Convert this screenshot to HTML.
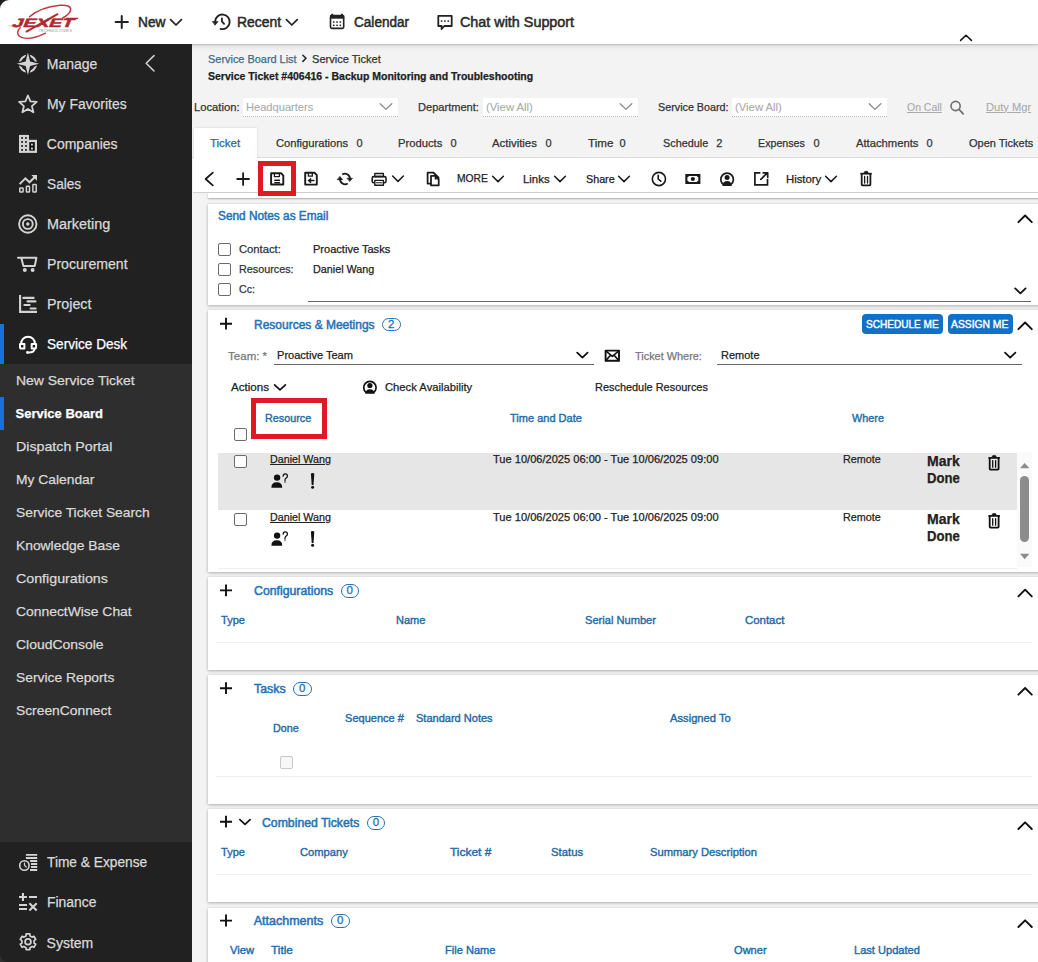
<!DOCTYPE html>
<html><head><meta charset="utf-8"><title>Service Ticket</title>
<style>
*{box-sizing:border-box;margin:0;padding:0}
html,body{width:1038px;height:962px;overflow:hidden;background:#f3f3f3;font-family:"Liberation Sans", sans-serif;color:#222}
.a{position:absolute;white-space:nowrap;line-height:1;z-index:20;-webkit-text-stroke:0.25px currentColor}
.r{position:absolute}
.card{position:absolute;left:208px;width:840px;background:#fff;box-shadow:0 1px 3px rgba(0,0,0,.28),0 0 1px rgba(0,0,0,.12)}
.cb{position:absolute;width:13px;height:13px;border:1px solid #6b6b6b;border-radius:2px;background:#fff;z-index:10}
.badge{position:absolute;border:1.5px solid #2372b6;border-radius:8px;color:#2372b6;font-size:11.5px;line-height:11px;-webkit-text-stroke:0.3px #2372b6;text-align:center;z-index:20;display:flex;align-items:center;justify-content:center}
.btn{position:absolute;background:#1170c8;border-radius:4px;z-index:10}
.red{position:absolute;border:5px solid #df1a23;z-index:30}
svg.ov{position:absolute;left:0;top:0;z-index:25}
</style></head><body>
<!-- header -->
<div class="r" style="left:0;top:0;width:1038px;height:44px;background:#fff;z-index:6;box-shadow:0 1px 1px rgba(0,0,0,.12),0 2px 6px rgba(0,0,0,.12)"></div>
<!-- sidebar -->
<div class="r" style="left:0;top:44px;width:192px;height:918px;background:#212121;z-index:7"></div>
<div class="r" style="left:0;top:364px;width:192px;height:478px;background:#2e2e2e;z-index:7"></div>
<div class="r" style="left:0;top:324px;width:4px;height:40px;background:#1672d8;z-index:8"></div>
<div class="r" style="left:0;top:397px;width:4px;height:33px;background:#1672d8;z-index:8"></div>
<!-- filter dropdowns -->
<div class="r" style="left:243px;top:98px;width:155px;height:19px;background:#fff;border-bottom:1px dotted #b5b5b5"></div>
<div class="r" style="left:483px;top:98px;width:155px;height:19px;background:#fff;border-bottom:1px dotted #b5b5b5"></div>
<div class="r" style="left:732px;top:98px;width:155px;height:19px;background:#fff;border-bottom:1px dotted #b5b5b5"></div>
<!-- tab bar -->
<div class="r" style="left:192px;top:157px;width:846px;height:1px;background:#dcdcdc"></div>
<div class="r" style="left:194px;top:127.5px;width:63px;height:31px;background:#fff;box-shadow:0 0 2px rgba(0,0,0,.15);z-index:2"></div>
<!-- toolbar -->
<div class="r" style="left:192.5px;top:158px;width:846px;height:35px;background:#fff;border-bottom:1px solid #cfcfcf;z-index:3"></div>
<!-- previous card peek -->
<div class="r" style="left:208px;top:193px;width:840px;height:5px;background:#fff;box-shadow:0 1px 2px rgba(0,0,0,.3);z-index:1"></div>
<!-- cards -->
<div class="card" style="top:203.5px;height:101.5px"></div>
<div class="card" style="top:309.7px;height:262.5px"></div>
<div class="card" style="top:577px;height:92.5px"></div>
<div class="card" style="top:675px;height:129px"></div>
<div class="card" style="top:809px;height:92.5px"></div>
<div class="card" style="top:907.5px;height:80px"></div>
<!-- send notes -->
<div class="cb" style="left:218px;top:243px"></div>
<div class="cb" style="left:218px;top:263px"></div>
<div class="cb" style="left:218px;top:283px"></div>
<div class="r" style="left:308px;top:300.5px;width:723px;height:1px;background:#666;z-index:5"></div>
<!-- resources -->
<div class="btn" style="left:862px;top:314px;width:81px;height:19.5px"></div>
<div class="btn" style="left:948px;top:314px;width:65px;height:19.5px"></div>
<div class="badge" style="left:381.5px;top:317.5px;width:19.5px;height:13.5px">2</div>
<div class="r" style="left:274px;top:363.8px;width:320px;height:1px;background:#666;z-index:5"></div>
<div class="r" style="left:716.5px;top:363.8px;width:305.5px;height:1px;background:#666;z-index:5"></div>
<div class="cb" style="left:233.5px;top:427.5px"></div>
<div class="r" style="left:218px;top:452.5px;width:799px;height:57.5px;background:#e6e6e6;z-index:5"></div>
<div class="cb" style="left:233.5px;top:455.2px"></div>
<div class="cb" style="left:233.5px;top:513.2px"></div>
<div class="r" style="left:1017px;top:452px;width:14.5px;height:115px;background:#fafafa;z-index:5"></div>
<div class="r" style="left:1020.4px;top:476px;width:8.5px;height:66px;background:#8c8c8c;border-radius:4.5px;z-index:6"></div>
<div class="r" style="left:218px;top:567.5px;width:799px;height:1px;background:#eee;z-index:5"></div>
<!-- configurations -->
<div class="badge" style="left:340.5px;top:584px;width:18.5px;height:13.5px">0</div>
<div class="r" style="left:216px;top:642px;width:816px;height:1px;background:#efefef;z-index:5"></div>
<!-- tasks -->
<div class="badge" style="left:293px;top:682px;width:18.5px;height:13.5px">0</div>
<div class="r" style="left:280px;top:756px;width:12.7px;height:12.8px;border:1px solid #c8c8c8;border-radius:2px;background:#f7f7f7;z-index:10"></div>
<div class="r" style="left:216px;top:776px;width:816px;height:1px;background:#efefef;z-index:5"></div>
<!-- combined -->
<div class="badge" style="left:366.8px;top:816px;width:18.5px;height:13.5px">0</div>
<div class="r" style="left:216px;top:873.5px;width:816px;height:1px;background:#efefef;z-index:5"></div>
<!-- attachments -->
<div class="badge" style="left:331px;top:914px;width:18.5px;height:13.5px">0</div>
<!-- red highlight boxes -->
<div class="red" style="left:258px;top:161px;width:38px;height:35px"></div>
<div class="red" style="left:251px;top:398px;width:76px;height:41px"></div>

<div class="a" style="left:137.90px;top:15.15px;font-size:14px;color:#2a2a2a;transform:scaleX(0.9816);transform-origin:0.70px 0;-webkit-text-stroke:0.5px #2a2a2a">New</div>
<div class="a" style="left:237.30px;top:15.15px;font-size:14px;color:#2a2a2a;transform:scaleX(0.9945);transform-origin:0.70px 0;-webkit-text-stroke:0.5px #2a2a2a">Recent</div>
<div class="a" style="left:354.30px;top:15.15px;font-size:14px;color:#2a2a2a;transform:scaleX(0.9693);transform-origin:0.70px 0;-webkit-text-stroke:0.5px #2a2a2a">Calendar</div>
<div class="a" style="left:460.30px;top:15.15px;font-size:14px;color:#2a2a2a;transform:scaleX(1.0256);transform-origin:0.70px 0;-webkit-text-stroke:0.5px #2a2a2a">Chat with Support</div>
<div class="a" style="left:46.80px;top:57.15px;font-size:14px;color:#d9d9d9">Manage</div>
<div class="a" style="left:46.80px;top:97.15px;font-size:14px;color:#d9d9d9;transform:scaleX(0.9936);transform-origin:0.70px 0">My Favorites</div>
<div class="a" style="left:46.80px;top:137.15px;font-size:14px;color:#d9d9d9">Companies</div>
<div class="a" style="left:46.80px;top:177.15px;font-size:14px;color:#d9d9d9;transform:scaleX(0.9761);transform-origin:0.70px 0">Sales</div>
<div class="a" style="left:46.80px;top:217.15px;font-size:14px;color:#d9d9d9;transform:scaleX(1.0274);transform-origin:0.70px 0">Marketing</div>
<div class="a" style="left:46.80px;top:257.15px;font-size:14px;color:#d9d9d9;transform:scaleX(1.0059);transform-origin:0.70px 0">Procurement</div>
<div class="a" style="left:46.80px;top:297.15px;font-size:14px;color:#d9d9d9;transform:scaleX(1.0198);transform-origin:0.70px 0">Project</div>
<div class="a" style="left:46.80px;top:337.15px;font-size:14px;color:#fff;transform:scaleX(0.9711);transform-origin:0.70px 0">Service Desk</div>
<div class="a" style="left:15.52px;top:373.57px;font-size:13.5px;color:#d9d9d9;transform:scaleX(1.0341);transform-origin:0.68px 0">New Service Ticket</div>
<div class="a" style="left:15.55px;top:407.00px;font-size:13px;color:#fff;font-weight:700">Service Board</div>
<div class="a" style="left:15.52px;top:439.57px;font-size:13.5px;color:#d9d9d9;transform:scaleX(1.0534);transform-origin:0.68px 0">Dispatch Portal</div>
<div class="a" style="left:15.52px;top:472.57px;font-size:13.5px;color:#d9d9d9;transform:scaleX(1.0245);transform-origin:0.68px 0">My Calendar</div>
<div class="a" style="left:15.52px;top:505.57px;font-size:13.5px;color:#d9d9d9;transform:scaleX(1.0241);transform-origin:0.68px 0">Service Ticket Search</div>
<div class="a" style="left:15.52px;top:538.57px;font-size:13.5px;color:#d9d9d9;transform:scaleX(1.0255);transform-origin:0.68px 0">Knowledge Base</div>
<div class="a" style="left:15.52px;top:571.57px;font-size:13.5px;color:#d9d9d9;transform:scaleX(1.0560);transform-origin:0.68px 0">Configurations</div>
<div class="a" style="left:15.52px;top:604.57px;font-size:13.5px;color:#d9d9d9;transform:scaleX(1.0280);transform-origin:0.68px 0">ConnectWise Chat</div>
<div class="a" style="left:15.52px;top:637.57px;font-size:13.5px;color:#d9d9d9;transform:scaleX(1.0331);transform-origin:0.68px 0">CloudConsole</div>
<div class="a" style="left:15.52px;top:670.57px;font-size:13.5px;color:#d9d9d9;transform:scaleX(1.0246);transform-origin:0.68px 0">Service Reports</div>
<div class="a" style="left:15.52px;top:703.57px;font-size:13.5px;color:#d9d9d9;transform:scaleX(1.0241);transform-origin:0.68px 0">ScreenConnect</div>
<div class="a" style="left:46.60px;top:855.15px;font-size:14px;color:#d9d9d9;transform:scaleX(0.9804);transform-origin:0.70px 0">Time &amp; Expense</div>
<div class="a" style="left:46.60px;top:895.15px;font-size:14px;color:#d9d9d9;transform:scaleX(0.9919);transform-origin:0.70px 0">Finance</div>
<div class="a" style="left:46.60px;top:935.65px;font-size:14px;color:#d9d9d9">System</div>
<div class="a" style="left:207.53px;top:53.97px;font-size:11.5px;color:#3b6b8c;transform:scaleX(0.9491);transform-origin:0.58px 0">Service Board List</div>
<div class="a" style="left:311.73px;top:53.97px;font-size:11.5px;color:#333;transform:scaleX(0.9610);transform-origin:0.58px 0">Service Ticket</div>
<div class="a" style="left:208.15px;top:70.89px;font-size:11px;color:#222;font-weight:700;transform:scaleX(0.9538);transform-origin:0.55px 0">Service Ticket #406416 - Backup Monitoring and Troubleshooting</div>
<div class="a" style="left:194.45px;top:101.69px;font-size:11px;color:#333;transform:scaleX(1.0211);transform-origin:0.55px 0">Location:</div>
<div class="a" style="left:246.45px;top:101.69px;font-size:11px;color:#aaa;transform:scaleX(1.0095);transform-origin:0.55px 0;-webkit-text-stroke:0.1px #aaa">Headquarters</div>
<div class="a" style="left:418.45px;top:101.69px;font-size:11px;color:#333;transform:scaleX(1.0058);transform-origin:0.55px 0">Department:</div>
<div class="a" style="left:486.45px;top:101.69px;font-size:11px;color:#aaa;transform:scaleX(1.0273);transform-origin:0.55px 0;-webkit-text-stroke:0.1px #aaa">(View All)</div>
<div class="a" style="left:658.45px;top:101.69px;font-size:11px;color:#333;transform:scaleX(0.9779);transform-origin:0.55px 0">Service Board:</div>
<div class="a" style="left:735.45px;top:101.69px;font-size:11px;color:#aaa;transform:scaleX(1.0273);transform-origin:0.55px 0;-webkit-text-stroke:0.1px #aaa">(View All)</div>
<div class="a" style="left:907.45px;top:101.69px;font-size:11px;color:#aaa;transform:scaleX(0.9495);transform-origin:0.55px 0;text-decoration:underline;-webkit-text-stroke:0.1px #aaa">On Call</div>
<div class="a" style="left:985.95px;top:101.69px;font-size:11px;color:#aaa;transform:scaleX(1.0127);transform-origin:0.55px 0;text-decoration:underline;-webkit-text-stroke:0.1px #aaa">Duty Mgr</div>
<div class="a" style="left:210.15px;top:137.69px;font-size:11px;color:#1f6aa5;transform:scaleX(1.0443);transform-origin:0.55px 0">Ticket</div>
<div class="a" style="left:276.05px;top:137.69px;font-size:11px;color:#333;transform:scaleX(1.0163);transform-origin:0.55px 0">Configurations</div>
<div class="a" style="left:356.45px;top:137.69px;font-size:11px;color:#333">0</div>
<div class="a" style="left:397.85px;top:137.69px;font-size:11px;color:#333;transform:scaleX(1.0225);transform-origin:0.55px 0">Products</div>
<div class="a" style="left:450.45px;top:137.69px;font-size:11px;color:#333">0</div>
<div class="a" style="left:492.45px;top:137.69px;font-size:11px;color:#333;transform:scaleX(1.0347);transform-origin:0.55px 0">Activities</div>
<div class="a" style="left:545.45px;top:137.69px;font-size:11px;color:#333">0</div>
<div class="a" style="left:587.95px;top:137.69px;font-size:11px;color:#333;transform:scaleX(1.0575);transform-origin:0.55px 0">Time</div>
<div class="a" style="left:619.45px;top:137.69px;font-size:11px;color:#333">0</div>
<div class="a" style="left:662.95px;top:137.69px;font-size:11px;color:#333;transform:scaleX(0.9846);transform-origin:0.55px 0">Schedule</div>
<div class="a" style="left:716.15px;top:137.69px;font-size:11px;color:#333">2</div>
<div class="a" style="left:758.45px;top:137.69px;font-size:11px;color:#333;transform:scaleX(0.9698);transform-origin:0.55px 0">Expenses</div>
<div class="a" style="left:813.45px;top:137.69px;font-size:11px;color:#333">0</div>
<div class="a" style="left:855.85px;top:137.69px;font-size:11px;color:#333;transform:scaleX(1.0222);transform-origin:0.55px 0">Attachments</div>
<div class="a" style="left:926.45px;top:137.69px;font-size:11px;color:#333">0</div>
<div class="a" style="left:969.05px;top:137.69px;font-size:11px;color:#333">Open Tickets</div>
<div class="a" style="left:523.45px;top:173.69px;font-size:11px;color:#222;transform:scaleX(1.0360);transform-origin:0.55px 0">Links</div>
<div class="a" style="left:586.05px;top:173.69px;font-size:11px;color:#222;transform:scaleX(0.9761);transform-origin:0.55px 0">Share</div>
<div class="a" style="left:786.05px;top:173.69px;font-size:11px;color:#222;transform:scaleX(1.0313);transform-origin:0.55px 0">History</div>
<div class="a" style="left:457.45px;top:173.19px;font-size:11px;color:#222;transform:scaleX(0.9340);transform-origin:0.55px 0">MORE</div>
<div class="a" style="left:217.97px;top:210.22px;font-size:12.5px;color:#2372b6;transform:scaleX(0.9453);transform-origin:0.62px 0;-webkit-text-stroke:0.5px #2372b6">Send Notes as Email</div>
<div class="a" style="left:239.05px;top:244.09px;font-size:11px;color:#333;transform:scaleX(1.0202);transform-origin:0.55px 0">Contact:</div>
<div class="a" style="left:239.05px;top:264.09px;font-size:11px;color:#333;transform:scaleX(0.9806);transform-origin:0.55px 0">Resources:</div>
<div class="a" style="left:239.05px;top:284.09px;font-size:11px;color:#333;transform:scaleX(0.9667);transform-origin:0.55px 0">Cc:</div>
<div class="a" style="left:312.85px;top:244.09px;font-size:11px;color:#222;transform:scaleX(1.0046);transform-origin:0.55px 0">Proactive Tasks</div>
<div class="a" style="left:312.85px;top:264.09px;font-size:11px;color:#222;transform:scaleX(0.9790);transform-origin:0.55px 0">Daniel Wang</div>
<div class="a" style="left:253.78px;top:318.72px;font-size:12.5px;color:#2372b6;transform:scaleX(0.9586);transform-origin:0.62px 0;-webkit-text-stroke:0.5px #2372b6">Resources &amp; Meetings</div>
<div class="a" style="left:228.12px;top:351.37px;font-size:11.5px;color:#777">Team: *</div>
<div class="a" style="left:277.23px;top:350.07px;font-size:11.5px;color:#222;transform:scaleX(0.9600);transform-origin:0.58px 0">Proactive Team</div>
<div class="a" style="left:635.42px;top:351.37px;font-size:11.5px;color:#777;transform:scaleX(0.9483);transform-origin:0.58px 0">Ticket Where:</div>
<div class="a" style="left:720.82px;top:350.07px;font-size:11.5px;color:#222;transform:scaleX(0.9553);transform-origin:0.58px 0">Remote</div>
<div class="a" style="left:231.43px;top:382.07px;font-size:11.5px;color:#222;transform:scaleX(1.0109);transform-origin:0.58px 0">Actions</div>
<div class="a" style="left:384.62px;top:382.07px;font-size:11.5px;color:#222;transform:scaleX(0.9767);transform-origin:0.58px 0">Check Availability</div>
<div class="a" style="left:595.42px;top:382.07px;font-size:11.5px;color:#222;transform:scaleX(0.9493);transform-origin:0.58px 0">Reschedule Resources</div>
<div class="a" style="left:265.12px;top:412.87px;font-size:11.5px;color:#1f6aa5;transform:scaleX(0.9379);transform-origin:0.58px 0;-webkit-text-stroke:0.4px #1f6aa5">Resource</div>
<div class="a" style="left:510.43px;top:412.87px;font-size:11.5px;color:#1f6aa5;transform:scaleX(0.9584);transform-origin:0.58px 0;-webkit-text-stroke:0.4px #1f6aa5">Time and Date</div>
<div class="a" style="left:852.42px;top:412.87px;font-size:11.5px;color:#1f6aa5;transform:scaleX(0.9407);transform-origin:0.58px 0;-webkit-text-stroke:0.4px #1f6aa5">Where</div>
<div class="a" style="left:269.75px;top:454.09px;font-size:11px;color:#222;transform:scaleX(0.9741);transform-origin:0.55px 0;text-decoration:underline">Daniel Wang</div>
<div class="a" style="left:493.45px;top:454.09px;font-size:11px;color:#222;transform:scaleX(1.0068);transform-origin:0.55px 0">Tue 10/06/2025 06:00 - Tue 10/06/2025 09:00</div>
<div class="a" style="left:843.05px;top:454.09px;font-size:11px;color:#222;transform:scaleX(0.9800);transform-origin:0.55px 0">Remote</div>
<div class="a" style="left:269.75px;top:512.09px;font-size:11px;color:#222;transform:scaleX(0.9741);transform-origin:0.55px 0;text-decoration:underline">Daniel Wang</div>
<div class="a" style="left:493.45px;top:512.09px;font-size:11px;color:#222;transform:scaleX(1.0068);transform-origin:0.55px 0">Tue 10/06/2025 06:00 - Tue 10/06/2025 09:00</div>
<div class="a" style="left:843.05px;top:512.09px;font-size:11px;color:#222;transform:scaleX(0.9800);transform-origin:0.55px 0">Remote</div>
<div class="a" style="left:926.90px;top:454.35px;font-size:14px;color:#222;font-weight:700;transform:scaleX(1.0042);transform-origin:0.70px 0">Mark</div>
<div class="a" style="left:926.90px;top:471.35px;font-size:14px;color:#222;font-weight:700;transform:scaleX(0.9357);transform-origin:0.70px 0">Done</div>
<div class="a" style="left:926.90px;top:512.15px;font-size:14px;color:#222;font-weight:700;transform:scaleX(1.0042);transform-origin:0.70px 0">Mark</div>
<div class="a" style="left:926.90px;top:528.55px;font-size:14px;color:#222;font-weight:700;transform:scaleX(0.9357);transform-origin:0.70px 0">Done</div>
<div class="a" style="left:253.78px;top:585.02px;font-size:12.5px;color:#2372b6;transform:scaleX(0.9823);transform-origin:0.62px 0;-webkit-text-stroke:0.5px #2372b6">Configurations</div>
<div class="a" style="left:221.12px;top:615.07px;font-size:11.5px;color:#1f6aa5;transform:scaleX(0.9576);transform-origin:0.58px 0;-webkit-text-stroke:0.4px #1f6aa5">Type</div>
<div class="a" style="left:395.93px;top:615.07px;font-size:11.5px;color:#1f6aa5;transform:scaleX(0.9574);transform-origin:0.58px 0;-webkit-text-stroke:0.4px #1f6aa5">Name</div>
<div class="a" style="left:585.42px;top:615.07px;font-size:11.5px;color:#1f6aa5;transform:scaleX(0.9645);transform-origin:0.58px 0;-webkit-text-stroke:0.4px #1f6aa5">Serial Number</div>
<div class="a" style="left:745.42px;top:615.07px;font-size:11.5px;color:#1f6aa5;transform:scaleX(0.9917);transform-origin:0.58px 0;-webkit-text-stroke:0.4px #1f6aa5">Contact</div>
<div class="a" style="left:253.78px;top:682.92px;font-size:12.5px;color:#2372b6;transform:scaleX(0.9886);transform-origin:0.62px 0;-webkit-text-stroke:0.5px #2372b6">Tasks</div>
<div class="a" style="left:272.62px;top:722.87px;font-size:11.5px;color:#1f6aa5;transform:scaleX(0.9330);transform-origin:0.58px 0;-webkit-text-stroke:0.4px #1f6aa5">Done</div>
<div class="a" style="left:345.43px;top:713.07px;font-size:11.5px;color:#1f6aa5;transform:scaleX(0.9591);transform-origin:0.58px 0;-webkit-text-stroke:0.4px #1f6aa5">Sequence #</div>
<div class="a" style="left:416.03px;top:713.07px;font-size:11.5px;color:#1f6aa5;transform:scaleX(0.9582);transform-origin:0.58px 0;-webkit-text-stroke:0.4px #1f6aa5">Standard Notes</div>
<div class="a" style="left:670.42px;top:713.07px;font-size:11.5px;color:#1f6aa5;transform:scaleX(0.9718);transform-origin:0.58px 0;-webkit-text-stroke:0.4px #1f6aa5">Assigned To</div>
<div class="a" style="left:261.88px;top:817.02px;font-size:12.5px;color:#2372b6;transform:scaleX(0.9791);transform-origin:0.62px 0;-webkit-text-stroke:0.5px #2372b6">Combined Tickets</div>
<div class="a" style="left:220.93px;top:846.67px;font-size:11.5px;color:#1f6aa5;transform:scaleX(0.9576);transform-origin:0.58px 0;-webkit-text-stroke:0.4px #1f6aa5">Type</div>
<div class="a" style="left:300.43px;top:846.67px;font-size:11.5px;color:#1f6aa5;transform:scaleX(0.9690);transform-origin:0.58px 0;-webkit-text-stroke:0.4px #1f6aa5">Company</div>
<div class="a" style="left:450.43px;top:846.67px;font-size:11.5px;color:#1f6aa5;transform:scaleX(1.0405);transform-origin:0.58px 0;-webkit-text-stroke:0.4px #1f6aa5">Ticket #</div>
<div class="a" style="left:550.82px;top:846.67px;font-size:11.5px;color:#1f6aa5;transform:scaleX(0.9846);transform-origin:0.58px 0;-webkit-text-stroke:0.4px #1f6aa5">Status</div>
<div class="a" style="left:650.42px;top:846.67px;font-size:11.5px;color:#1f6aa5;transform:scaleX(0.9725);transform-origin:0.58px 0;-webkit-text-stroke:0.4px #1f6aa5">Summary Description</div>
<div class="a" style="left:253.78px;top:915.22px;font-size:12.5px;color:#2372b6;-webkit-text-stroke:0.5px #2372b6">Attachments</div>
<div class="a" style="left:230.23px;top:944.57px;font-size:11.5px;color:#1f6aa5;transform:scaleX(0.9748);transform-origin:0.58px 0;-webkit-text-stroke:0.4px #1f6aa5">View</div>
<div class="a" style="left:271.12px;top:944.57px;font-size:11.5px;color:#1f6aa5;transform:scaleX(1.0298);transform-origin:0.58px 0;-webkit-text-stroke:0.4px #1f6aa5">Title</div>
<div class="a" style="left:445.43px;top:944.57px;font-size:11.5px;color:#1f6aa5;transform:scaleX(0.9614);transform-origin:0.58px 0;-webkit-text-stroke:0.4px #1f6aa5">File Name</div>
<div class="a" style="left:734.42px;top:944.57px;font-size:11.5px;color:#1f6aa5;transform:scaleX(0.9619);transform-origin:0.58px 0;-webkit-text-stroke:0.4px #1f6aa5">Owner</div>
<div class="a" style="left:854.32px;top:944.57px;font-size:11.5px;color:#1f6aa5;transform:scaleX(0.9615);transform-origin:0.58px 0;-webkit-text-stroke:0.4px #1f6aa5">Last Updated</div>
<div class="a" style="left:865.98px;top:319.11px;font-size:10.5px;color:#fff;transform:scaleX(0.9584);transform-origin:0.53px 0;-webkit-text-stroke:0.4px #fff">SCHEDULE ME</div>
<div class="a" style="left:951.48px;top:319.11px;font-size:10.5px;color:#fff;transform:scaleX(0.9823);transform-origin:0.53px 0;-webkit-text-stroke:0.4px #fff">ASSIGN ME</div>
<svg class="ov" width="1038" height="962" viewBox="0 0 1038 962" fill="none" stroke-linecap="round" stroke-linejoin="round">
<!-- window corner -->
<path d="M0 0 H9 A9 9 0 0 0 0 9 Z" fill="#1e1e1e" stroke="none"/>
<path d="M0 962 H8 A8 8 0 0 1 0 954 Z" fill="#3a3a3a" stroke="none" opacity="0.6"/>
<!-- logo -->
<g>
  <path d="M29.5 16.8 C36 11 48 6.5 60 5.3 C67 4.7 71 6.2 70.6 9.8 C70.3 12.5 67 15.5 62.5 18" stroke="#c23a40" stroke-width="1.5"/>
  <path d="M20.3 27.6 C16.5 31 16.5 35.5 21.5 37.4 C27 39.3 36 38 45.5 33.2" stroke="#c23a40" stroke-width="1.4"/>
  <path d="M57.5 14.2 L26.5 31.6" stroke="#b8262d" stroke-width="1.9"/>
  <g transform="translate(11.5 26.5) skewX(-22)">
    <text x="0" y="0" font-family="Liberation Sans" font-weight="bold" font-size="12" fill="#b22a30" textLength="61" lengthAdjust="spacingAndGlyphs" stroke="#b22a30" stroke-width="0.5">JEXET</text>
  </g>
  <path d="M7.8 26 L18 25.2 L18 26.6 Z" fill="#b22a30" stroke="none"/>
  <path d="M66 17.8 L78.5 17.8 L77.5 19.2 L66 19.2 Z" fill="#b22a30" stroke="none"/>
  <text x="38.5" y="31.8" font-family="Liberation Sans" font-size="3" fill="#9a9a9a" textLength="33.5" lengthAdjust="spacingAndGlyphs" stroke="none">TECHNOLOGIES</text>
</g>
<!-- header icons -->
<g stroke="#222" stroke-width="1.7">
  <path d="M115.6 22 H127.9 M121.75 15.9 V28.1" stroke-width="2"/>
  <path d="M170.6 19.6 L176 25 L181.4 19.6" stroke-width="1.75"/>
  <path d="M215.1 21.4 A7.3 7.3 0 1 1 220.6 28.9" stroke-width="1.9"/>
  <path d="M212.7 21.6 H217.9 L215.3 24.9 Z" fill="#222" stroke-width="0.8"/>
  <path d="M221.9 18.3 V21.4 L224.1 23.9" stroke-width="1.8"/>
  <path d="M286.4 19.6 L291.8 25 L297.2 19.6" stroke-width="1.75"/>
  <rect x="330.5" y="15.6" width="13.2" height="12.8" rx="1.3" stroke-width="1.6"/>
  <rect x="330" y="15.3" width="14.2" height="3.4" fill="#222" stroke="none"/>
  <rect x="331.2" y="13.8" width="2" height="2" fill="#222" stroke="none"/>
  <rect x="341" y="13.8" width="2" height="2" fill="#222" stroke="none"/>
  <g fill="#222" stroke="none">
    <rect x="333" y="21.3" width="1.5" height="1.5"/><rect x="336.3" y="21.3" width="1.5" height="1.5"/><rect x="339.6" y="21.3" width="1.5" height="1.5"/>
    <rect x="333" y="24.6" width="1.5" height="1.5"/><rect x="336.3" y="24.6" width="1.5" height="1.5"/><rect x="339.6" y="24.6" width="1.5" height="1.5"/>
  </g>
  <path d="M438.3 15.9 H451.7 V26 H444.3 L441.6 29 V26 H438.3 Z" stroke-width="1.8"/>
  <g fill="#222" stroke="none"><circle cx="441.6" cy="21.1" r="0.9"/><circle cx="444.9" cy="21.1" r="0.9"/><circle cx="448.3" cy="21.1" r="0.9"/></g>
  <path d="M960.6 40.4 L966 35.3 L971.4 40.4" stroke="#111" stroke-width="1.5"/>
</g>
<!-- sidebar icons -->
<g stroke="#d4d4d4" stroke-width="2" fill="none">
  <circle cx="27.9" cy="63.8" r="8.2" stroke-width="2.1"/>
  <path d="M27.9 51 L31.9 59.8 L40.7 63.8 L31.9 67.8 L27.9 76.6 L23.9 67.8 L15.1 63.8 L23.9 59.8 Z" fill="#212121" stroke="none"/>
  <path d="M27.9 52.5 L30.1 61.6 L39.2 63.8 L30.1 66 L27.9 75.1 L25.7 66 L16.6 63.8 L25.7 61.6 Z" fill="#d4d4d4" stroke="none"/>
  <path d="M154 55.6 L146.2 63.3 L154 71" stroke-width="1.5"/>
  <path d="M27.9 95.5 L30.4 101.3 L36.7 101.9 L31.9 106.1 L33.4 112.3 L27.9 109 L22.4 112.3 L23.9 106.1 L19.1 101.9 L25.4 101.3 Z" stroke-width="1.8"/>
  <rect x="19" y="134.9" width="10" height="18" fill="#d4d4d4" stroke="none"/>
  <rect x="29" y="139.8" width="8" height="13.1" fill="#d4d4d4" stroke="none"/>
  <g fill="#111" stroke="none">
    <rect x="21.2" y="137.1" width="1.7" height="1.7"/><rect x="25.1" y="137.1" width="1.7" height="1.7"/>
    <rect x="21.2" y="141.1" width="1.7" height="1.7"/><rect x="25.1" y="141.1" width="1.7" height="1.7"/>
    <rect x="21.2" y="145.1" width="1.7" height="1.7"/><rect x="25.1" y="145.1" width="1.7" height="1.7"/>
    <rect x="21.2" y="149.1" width="1.7" height="1.7"/><rect x="25.1" y="149.1" width="1.7" height="1.7"/>
    <rect x="29.3" y="142.1" width="5.5" height="8.6"/>
  </g>
  <g fill="#d4d4d4" stroke="none"><rect x="31" y="143.7" width="1.9" height="1.8"/><rect x="31" y="147.6" width="1.9" height="1.9"/></g>
  <path d="M19.6 184.1 L25.4 178.4 L29.4 182.3 L35.2 176.7" stroke-width="2" stroke-linecap="butt" stroke-linejoin="miter"/>
  <path d="M31.3 175 H37 V180.7 Z" fill="#d4d4d4" stroke="none"/>
  <rect x="19.8" y="188" width="3.3" height="4.1" rx="0.6" stroke-width="1.5"/>
  <rect x="26.4" y="186.3" width="3.1" height="5.8" rx="0.6" stroke-width="1.5"/>
  <rect x="32.9" y="184.5" width="3.3" height="7.6" rx="0.6" stroke-width="1.5"/>
  <circle cx="27.8" cy="224" r="8.7" stroke-width="1.9"/>
  <circle cx="27.8" cy="224" r="4.9" stroke-width="1.9"/>
  <circle cx="27.8" cy="224" r="1.7" fill="#d4d4d4" stroke="none"/>
  <path d="M18 257.8 H21.3 M21.3 257.8 H36.4 L34.8 265.9 H23.4 Z" stroke-width="2" stroke-linejoin="round"/>
  <circle cx="24.8" cy="269.9" r="2" fill="#d4d4d4" stroke="none"/>
  <circle cx="32.6" cy="269.9" r="2" fill="#d4d4d4" stroke="none"/>
  <path d="M20.1 294.9 V311.9 H37" stroke-width="2.1" stroke-linecap="butt" stroke-linejoin="miter"/>
  <path d="M23.4 297.9 H33.6 M27.6 301.4 H35.4 M24.4 305 H29.6 M30.6 308.5 H35.6" stroke-width="2.2" stroke-linecap="round"/>
  <g stroke="#fff">
  <path d="M21.2 343.5 A6.85 6.85 0 0 1 34.9 343.5" stroke-width="2"/>
  <path d="M20.2 344 H24.4 V348.6 H21.6 Q20 348.6 20 347 V344 Z" stroke-width="2"/>
  <path d="M35.9 344 H31.7 V348.6 H34.5 Q36.1 348.6 36.1 347 V344 Z" stroke-width="2"/>
  <path d="M34.5 349.2 C34.3 351.6 32.6 352.6 28.5 352.6" stroke-width="1.9"/>
  <circle cx="27.5" cy="352.5" r="1.4" fill="#fff" stroke="none"/>
  </g>
  <circle cx="24.4" cy="865.5" r="4.7" stroke-width="1.6"/>
  <path d="M24.5 863.2 V865.4 L26.2 867" stroke-width="1.2"/>
  <path d="M25.9 854.9 H37.2 M25.9 857.95 H37.2 M30.1 860.95 H37.2 M31 864 H37.2 M31 867 H37.2 M30 870.05 H37.2" stroke-width="1.9" stroke-linecap="butt"/>
  <path d="M19 897 H26.9 M22.95 893 V900.9 M29 897 H37 M19 905 H27 M19 909 H27 M29.4 903.3 L36.7 910.4 M36.7 903.3 L29.4 910.4" stroke-width="2.1" stroke-linecap="butt"/>
  <path d="M25.98 935.94 L26.18 933.91 L29.82 933.91 L30.02 935.94 L32.07 937.12 L33.92 936.28 L35.75 939.43 L34.09 940.62 L34.09 942.98 L35.75 944.17 L33.92 947.32 L32.07 946.48 L30.02 947.66 L29.82 949.69 L26.18 949.69 L25.98 947.66 L23.93 946.48 L22.08 947.32 L20.25 944.17 L21.91 942.98 L21.91 940.62 L20.25 939.43 L22.08 936.28 L23.93 937.12 Z" stroke-width="1.7"/>
  <circle cx="28" cy="941.8" r="2.9" stroke-width="1.8"/>
</g>
<!-- filter row icons -->
<g stroke="#8a8a8a" stroke-width="1.3">
  <path d="M380.2 103.8 L386 109.4 L391.8 103.8"/>
  <path d="M620.2 103.8 L626 109.4 L631.8 103.8"/>
  <path d="M869.2 103.8 L875 109.4 L880.8 103.8"/>
  <circle cx="955.6" cy="106" r="4.6" stroke="#6e6e6e" stroke-width="1.6"/>
  <path d="M959 109.4 L963.2 113.8" stroke="#6e6e6e" stroke-width="1.7"/>
  <path d="M302.9 55.2 L306 58.3 L302.9 61.4" stroke="#222" stroke-width="1.5"/>
</g>
<!-- toolbar icons -->
<g stroke="#1a1a1a" stroke-width="1.6">
  <path d="M212.8 172.6 L205.6 179 L212.8 185.4" stroke-width="1.8"/>
  <path d="M237.2 179 H249 M243.1 173.1 V184.9" stroke-width="1.8"/>
  <path d="M271.1 173.2 H281.1 L283.3 175.6 V184.5 H271.1 Z" stroke-width="1.9"/>
  <path d="M274.4 173.3 V176.6 H279.4 V173.3" stroke-width="1.3"/>
  <path d="M274.3 180.3 H280.1 M274.3 182.7 H280.1" stroke-width="1.5" stroke-linecap="butt"/>
  <path d="M305.2 172.8 H314.7 L316.8 175.2 V184.6 H305.2 Z" stroke-width="1.9"/>
  <path d="M308.4 172.9 V176.2 H312.3 V172.9" stroke-width="1.3"/>
  <path d="M308.6 180.6 H313.9" stroke-width="1.5"/>
  <path d="M310.4 178.5 L308.3 180.6 L310.4 182.7 Z" fill="#1a1a1a" stroke-width="1"/>
  <path d="M342.3 174.4 A5 5 0 0 1 349.9 179.2" stroke-width="1.8" stroke-linecap="butt"/>
  <path d="M347.2 178.2 H352.5 L349.85 181.3 Z" fill="#1a1a1a" stroke-width="0.6"/>
  <path d="M347.7 183.5 A5 5 0 0 1 340.1 178.8" stroke-width="1.8" stroke-linecap="butt"/>
  <path d="M337.4 179.7 H342.7 L340.05 176.6 Z" fill="#1a1a1a" stroke-width="0.6"/>
  <rect x="374.8" y="173.5" width="8.6" height="3" stroke-width="1.3"/>
  <rect x="372.2" y="176.6" width="13.8" height="6.2" rx="1.6" stroke-width="1.6"/>
  <rect x="374.8" y="180.4" width="8.6" height="4.8" fill="#fff" stroke-width="1.4"/>
  <path d="M376.4 182.7 H381.8" stroke-width="1.1"/>
  <path d="M392.6 176 L398 181.4 L403.4 176" stroke-width="1.5"/>
  <path d="M430.4 183.5 H427.6 V172.5 H433.3 L438.6 177.6" stroke-width="1.75"/>
  <path d="M431 175.9 H435.3 L438.7 179.2 V185.4 H431 Z" stroke-width="1.75"/>
  <path d="M435.4 176 V178.9 H438.5" stroke-width="1.4"/>
  <path d="M492.6 176.2 L498 181.6 L503.4 176.2" stroke-width="1.5"/>
  <path d="M554.6 176.2 L560 181.6 L565.4 176.2" stroke-width="1.5"/>
  <path d="M618.6 176.2 L624 181.6 L629.4 176.2" stroke-width="1.5"/>
  <circle cx="658.9" cy="179" r="6.6" stroke-width="1.6"/>
  <path d="M658.2 175.3 V179 L660.8 181.2" stroke-width="1.6"/>
  <rect x="685.3" y="174" width="15.1" height="10" fill="#1a1a1a" stroke="none"/>
  <path d="M688.9 176.1 H696.8 Q697 177.1 698.3 177.3 V180.7 Q697 180.9 696.8 181.9 H688.9 Q688.7 180.9 687.4 180.7 V177.3 Q688.7 177.1 688.9 176.1 Z" fill="#fff" stroke="none"/>
  <circle cx="692.85" cy="179" r="2.1" fill="#1a1a1a" stroke="none"/>
  <path d="M723.2 184.3 A6.3 6.3 0 1 1 731 184.3" stroke-width="1.7"/>
  <circle cx="727.1" cy="177.6" r="2.5" fill="#1a1a1a" stroke="none"/>
  <path d="M722.5 185.9 Q722.7 181.1 727.1 181.1 Q731.5 181.1 731.7 185.9 Z" fill="#1a1a1a" stroke="none"/>
  <path d="M760.4 172.9 H754.9 V184.8 H767.5 V179" stroke-width="1.7" stroke-linejoin="miter" stroke-linecap="butt"/>
  <path d="M760.8 179.4 L767 173.2 M763.2 172.9 H767.7 V177.4" stroke-width="1.7"/>
  <path d="M825.6 176.2 L831 181.6 L836.4 176.2" stroke-width="1.5"/>
  <path d="M864 172.9 L864.9 171.3 H867.3 L868.2 172.9 Z" fill="#1a1a1a" stroke-width="0.6"/>
  <path d="M860.3 173.7 H871.8" stroke-width="1.7" stroke-linecap="butt"/>
  <path d="M861.7 174.2 V184.6 Q861.7 185.4 862.5 185.4 H869.6 Q870.4 185.4 870.4 184.6 V174.2" stroke-width="1.8"/>
  <path d="M864.6 176.5 V183 M867.5 176.5 V183" stroke-width="1.3"/>
</g>
<!-- card icons -->
<g stroke="#111" stroke-width="1.6">
  <path d="M1018.4 222.2 L1025.1 215.5 L1031.8 222.2" stroke-width="1.9"/>
  <path d="M1015.2 288.4 L1020.4 293.4 L1025.6 288.4" stroke-width="1.8"/>
  <path d="M220 323.7 H232 M226 317.7 V329.5" stroke-width="1.9" stroke-linecap="butt"/>
  <path d="M1018.4 329.2 L1025.1 322.5 L1031.8 329.2" stroke-width="1.9"/>
  <path d="M577.2 352.7 L582.4 357.6 L587.6 352.7" stroke-width="1.8"/>
  <path d="M1005 352.7 L1010.2 357.6 L1015.4 352.7" stroke-width="1.8"/>
  <rect x="605.6" y="350.6" width="13.4" height="10.2" stroke-width="1.9"/>
  <path d="M605.8 350.8 L612.3 356.4 L618.8 350.8 M605.8 360.6 L610.5 355.3 M618.8 360.6 L614.1 355.3" stroke-width="1.6"/>
  <path d="M274.6 384.8 L280 389.8 L285.4 384.8" stroke-width="1.7"/>
  <path d="M366 392.4 A6.2 6.2 0 1 1 373.8 392.4" stroke-width="1.7"/>
  <circle cx="369.9" cy="385.5" r="2.6" fill="#111" stroke="none"/>
  <path d="M365.3 393.7 Q365.5 389.2 369.9 389.2 Q374.3 389.2 374.5 393.7 Z" fill="#111" stroke="none"/>
  <path d="M220 590.4 H232 M226 584.4 V596.2" stroke-width="1.9" stroke-linecap="butt"/>
  <path d="M1018.4 596.4 L1025.1 589.7 L1031.8 596.4" stroke-width="1.9"/>
  <path d="M220 688.2 H232 M226 682.2 V694.0" stroke-width="1.9" stroke-linecap="butt"/>
  <path d="M1018.4 694.7 L1025.1 688.0 L1031.8 694.7" stroke-width="1.9"/>
  <path d="M220 821.8 H232 M226 815.8 V827.6" stroke-width="1.9" stroke-linecap="butt"/>
  <path d="M239.9 819.6 L245 824.3 L250.1 819.6" stroke-width="1.7"/>
  <path d="M1018.4 829 L1025.1 822.3 L1031.8 829" stroke-width="1.9"/>
  <path d="M220 920.6 H232 M226 914.6 V926.4" stroke-width="1.9" stroke-linecap="butt"/>
  <path d="M1018.4 927 L1025.1 920.3 L1031.8 927" stroke-width="1.9"/>
</g>
<!-- row icons -->
<g fill="#111" stroke="none">
  <circle cx="277.1" cy="477.6" r="3.2"/>
  <path d="M271.4 487.8 Q271.2 482.3 276.8 482.3 Q282.4 482.3 282.2 487.8 Z"/>
  <path d="M283.1 476.2 Q283.1 473.8 285.3 473.8 Q287.4 473.8 287.4 475.9 Q287.4 477.4 285.9 478.3 Q285 478.9 285 480.4" fill="none" stroke="#111" stroke-width="1.25"/>
  <circle cx="285" cy="482.0" r="0.75"/>
  <path d="M310.9 473.6 Q312.6 472.5 314.3 473.6 L313.5 485.0 H311.7 Z"/>
  <circle cx="312.6" cy="487.3" r="1.5"/>
  <circle cx="277.1" cy="535.6" r="3.2"/>
  <path d="M271.4 545.8 Q271.2 540.3 276.8 540.3 Q282.4 540.3 282.2 545.8 Z"/>
  <path d="M283.1 534.2 Q283.1 531.8 285.3 531.8 Q287.4 531.8 287.4 533.9 Q287.4 535.4 285.9 536.3 Q285 536.9 285 538.4" fill="none" stroke="#111" stroke-width="1.25"/>
  <circle cx="285" cy="540.0" r="0.75"/>
  <path d="M310.9 531.6 Q312.6 530.5 314.3 531.6 L313.5 543.0 H311.7 Z"/>
  <circle cx="312.6" cy="545.3" r="1.5"/>
  <path d="M1020 468.2 L1024.7 463 L1029.4 468.2 Z" fill="#8c8c8c"/>
  <path d="M1020 553.8 H1029.4 L1024.7 559.2 Z" fill="#8c8c8c"/>
</g>
<g stroke="#111" stroke-width="1.5">
  <path d="M991.9 457.2 L992.8 455.6 H995.5 L996.4 457.2 Z" fill="#111" stroke-width="0.6"/>
  <path d="M988.4 457.9 H999.9" stroke-width="1.7" stroke-linecap="butt"/>
  <path d="M989.7 458.4 V468.8 Q989.7 469.6 990.5 469.6 H997.8 Q998.6 469.6 998.6 468.8 V458.4" stroke-width="1.8"/>
  <path d="M992.7 460.7 V467.2 M995.6 460.7 V467.2" stroke-width="1.3"/>
  <path d="M991.9 515.2 L992.8 513.6 H995.5 L996.4 515.2 Z" fill="#111" stroke-width="0.6"/>
  <path d="M988.4 515.9 H999.9" stroke-width="1.7" stroke-linecap="butt"/>
  <path d="M989.7 516.4 V526.8 Q989.7 527.6 990.5 527.6 H997.8 Q998.6 527.6 998.6 526.8 V516.4" stroke-width="1.8"/>
  <path d="M992.7 518.7 V525.2 M995.6 518.7 V525.2" stroke-width="1.3"/>
</g>
</svg>

</body></html>
